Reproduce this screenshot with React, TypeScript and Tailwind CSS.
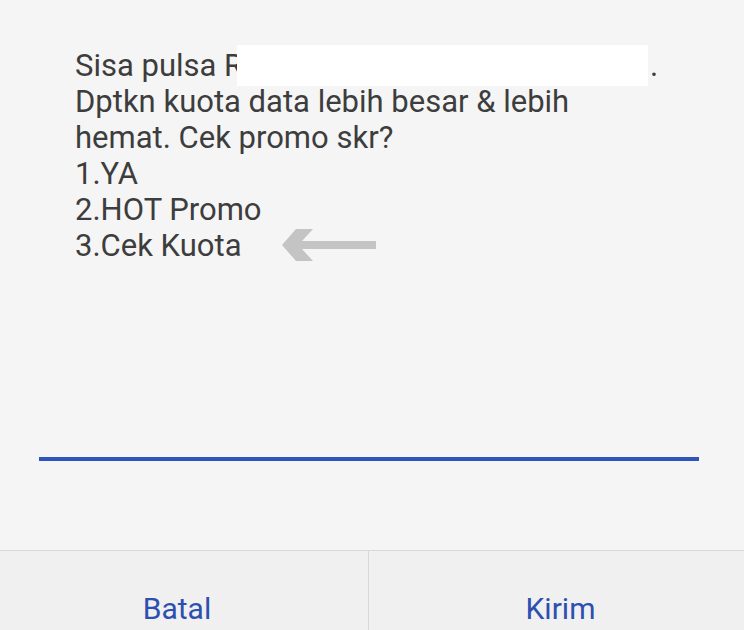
export default function App() {
  const lines = [
    "Dptkn kuota data lebih besar & lebih",
    "hemat. Cek promo skr?",
    "1.YA",
    "2.HOT Promo",
  ];

  return (
    <div
      className="w-[744px] h-[630px] bg-[#f5f5f5] flex flex-col overflow-hidden"
      style={{ fontFamily: "Roboto, 'Noto Sans', sans-serif" }}
    >
      {/* Message body */}
      <div className="flex-1 flex flex-col">
        <div className="pl-[75px] pt-[48px] text-[31px] leading-[36px] text-[#3d3d3d]">
          <div className="relative">
            <span>Sisa pulsa Rp</span>
            <div className="absolute left-[162px] top-[-3px] w-[411px] h-[41px] bg-white"></div>
            <span className="absolute left-[575px] top-0">.</span>
          </div>
          {lines.map((line, i) => (
            <div key={i}>{line}</div>
          ))}
          <div className="flex items-center">
            <span>3.Cek Kuota</span>
            <svg width="94" height="36" viewBox="0 0 94 36" className="ml-[40px] mt-[-3px]">
              <path d="M0 18 L14 2 L31 2 L20 14 L94 14 L94 22 L20 22 L31 34 L14 34 Z" fill="#c4c4c4" />
            </svg>
          </div>
        </div>

        {/* Input underline */}
        <div className="mt-auto mb-[89px] ml-[39px] mr-[45px] h-[4px] bg-[#2e56b8]"></div>
      </div>

      {/* Buttons */}
      <div className="h-[80px] flex border-t border-[#d8d8d8] bg-[#f0f0f0]">
        <button className="w-[369px] border-r border-[#d8d8d8] flex items-start justify-center pt-[40px] pr-[14px] text-[30px] leading-[36px] text-[#2c4fb0]">
          Batal
        </button>
        <button className="flex-1 flex items-start justify-center pt-[40px] pl-[8px] text-[30px] leading-[36px] text-[#2c4fb0]">
          Kirim
        </button>
      </div>
    </div>
  );
}
